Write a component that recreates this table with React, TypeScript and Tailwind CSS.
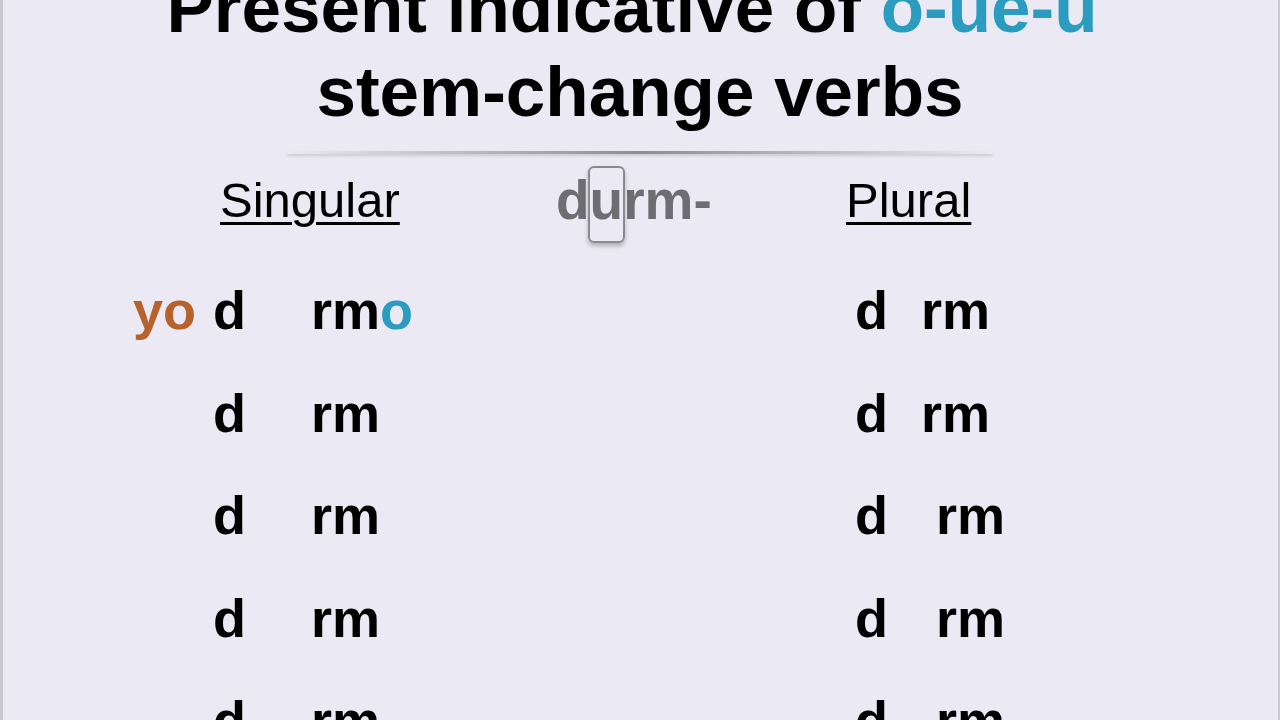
import React from "react";

const font = { fontFamily: '"Liberation Sans", Arial, sans-serif' };

function Row({ yo, left, right, rightGap }: { yo?: boolean; left: React.ReactNode; right: React.ReactNode; rightGap: string }) {
  return (
    <div className="flex h-[102.5px] items-start text-[54px] font-bold leading-[102.5px] text-black whitespace-nowrap">
      <span className="w-[80px] text-[#b6632b]">{yo ? "yo" : ""}</span>
      <span className="w-[98px]">d</span>
      <span className="w-[544px]">{left}</span>
      <span className={rightGap}>d</span>
      <span>{right}</span>
    </div>
  );
}

export default function App() {
  return (
    <div className="relative h-[720px] w-[1280px] overflow-hidden bg-[#ebe9f3]" style={font}>
      <div className="absolute left-0 top-0 h-full w-[3px] bg-[#c9c8d0]" />
      <div className="absolute right-0 top-0 h-full w-[2px] bg-[#c9c8d0]" />
      <div className="-mt-[33.6px] flex flex-col items-center text-center text-[71px] font-bold leading-[84px] text-black">
        <div className="whitespace-nowrap pr-[16px]">
          Present indicative of <span className="text-[#2a9cc0]">o-ue-u</span>
        </div>
        <div className="whitespace-nowrap">stem-change verbs</div>
      </div>
      <div className="mx-auto mt-[17px] h-[3px] w-[706px] rounded-full bg-gradient-to-r from-transparent via-[#8d8c92] to-transparent shadow-[0_2px_3px_rgba(0,0,0,0.15)]" />
      <div className="mt-[16px] flex h-[60px] items-start whitespace-nowrap text-[49px] leading-[60px] text-black">
        <span className="ml-[220px] w-[336px] underline decoration-[3px] underline-offset-[5px]">Singular</span>
        <span className="w-[290px] text-[55px] font-bold text-[#6e6d72]">
          d
          <span className="relative">
            u
            <span className="absolute left-[-2px] right-[-2px] top-[-3px] bottom-[-12px] rounded-[6px] border-2 border-[#8b8a90] shadow-[0_3px_4px_rgba(0,0,0,0.25)]" />
          </span>
          rm-
        </span>
        <span className="underline decoration-[3px] underline-offset-[5px]">Plural</span>
      </div>
      <div className="ml-[133px] mt-[29px] flex flex-col">
        <Row yo left={<>rm<span className="text-[#2a9cc0]">o</span></>} right="rm" rightGap="w-[66px]" />
        <Row left="rm" right="rm" rightGap="w-[66px]" />
        <Row left="rm" right="rm" rightGap="w-[81px]" />
        <Row left="rm" right="rm" rightGap="w-[81px]" />
        <Row left="rm" right="rm" rightGap="w-[81px]" />
      </div>
    </div>
  );
}
